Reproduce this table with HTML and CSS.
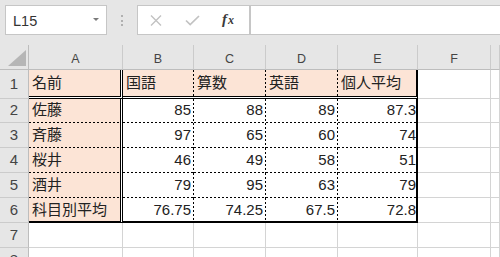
FILE: index.html
```html
<!DOCTYPE html>
<html lang="ja">
<head>
<meta charset="utf-8">
<title>Sheet</title>
<link rel="stylesheet" href="styles.css">
</head>
<body>
<div class="topbar">
  <div class="namebox"><span class="ref">L15</span><span class="caret"></span></div>
  <div class="grip"><i></i><i></i><i></i></div>
  <div class="btns">
    <span class="btn"><svg width="12" height="11" viewBox="0 0 12 11"><path d="M1 0.5 L11 10.5 M11 0.5 L1 10.5" stroke="#c2c2c2" stroke-width="1.4" fill="none"/></svg></span>
    <span class="btn"><svg width="15" height="11" viewBox="0 0 15 11"><path d="M1 5.5 L5.2 9.6 L14 1" stroke="#c2c2c2" stroke-width="1.7" fill="none"/></svg></span>
    <span class="btn fx"><span class="f">f</span><span class="x">x</span></span>
  </div>
  <div class="formula"></div>
</div>
<div class="sheet">
  <div class="corner"><svg width="28" height="24" viewBox="0 0 28 24"><polygon points="26,5 26,21 8,21" fill="#b6b6b6"/></svg></div>
  <div class="ch">A</div><div class="ch">B</div><div class="ch">C</div><div class="ch">D</div><div class="ch">E</div><div class="ch">F</div><div class="ch"></div>

  <div class="rh r1">1</div>
  <div class="c fill dr db">名前</div>
  <div class="c fill vdot db">国語</div>
  <div class="c fill vdot db">算数</div>
  <div class="c fill vdot db">英語</div>
  <div class="c fill tr db">個人平均</div>
  <div class="c"></div><div class="c"></div>

  <div class="rh">2</div>
  <div class="c fill dr hdot">佐藤</div>
  <div class="c num vdot hdot">85</div>
  <div class="c num vdot hdot">88</div>
  <div class="c num vdot hdot">89</div>
  <div class="c num tr hdot">87.3</div>
  <div class="c"></div><div class="c"></div>

  <div class="rh">3</div>
  <div class="c fill dr hdot">斉藤</div>
  <div class="c num vdot hdot">97</div>
  <div class="c num vdot hdot">65</div>
  <div class="c num vdot hdot">60</div>
  <div class="c num tr hdot">74</div>
  <div class="c"></div><div class="c"></div>

  <div class="rh">4</div>
  <div class="c fill dr hdot">桜井</div>
  <div class="c num vdot hdot">46</div>
  <div class="c num vdot hdot">49</div>
  <div class="c num vdot hdot">58</div>
  <div class="c num tr hdot">51</div>
  <div class="c"></div><div class="c"></div>

  <div class="rh">5</div>
  <div class="c fill dr hdot">酒井</div>
  <div class="c num vdot hdot">79</div>
  <div class="c num vdot hdot">95</div>
  <div class="c num vdot hdot">63</div>
  <div class="c num tr hdot">79</div>
  <div class="c"></div><div class="c"></div>

  <div class="rh">6</div>
  <div class="c fill dr tb">科目別平均</div>
  <div class="c num vdot tb">76.75</div>
  <div class="c num vdot tb">74.25</div>
  <div class="c num vdot tb">67.5</div>
  <div class="c num tr tb">72.8</div>
  <div class="c"></div><div class="c"></div>

  <div class="rh">7</div>
  <div class="c"></div><div class="c"></div><div class="c"></div><div class="c"></div><div class="c"></div><div class="c"></div><div class="c"></div>

  <div class="rh">8</div>
  <div class="c"></div><div class="c"></div><div class="c"></div><div class="c"></div><div class="c"></div><div class="c"></div><div class="c"></div>
</div>
</body>
</html>
```

FILE: styles.css
```css
* { box-sizing: border-box; margin: 0; padding: 0; }
html, body { width: 500px; height: 257px; overflow: hidden; background: #fff; }
body { font-family: "Liberation Sans", "Noto Sans CJK JP", sans-serif; }

/* formula bar area */
.topbar { display: flex; height: 45px; background: #e6e6e6; padding: 5px 0 10px 5px; }
.namebox { width: 102px; background: #fff; border: 1px solid #c6c6c6; display: flex; justify-content: space-between; align-items: center; padding: 3px 7px 0 7px; }
.ref { font-size: 14.5px; color: #333; line-height: 17px; }
.caret { align-self: flex-start; margin-top: 9px; width: 0; height: 0; border-left: 3.5px solid transparent; border-right: 3.5px solid transparent; border-top: 3.5px solid #7a7a7a; }
.grip { width: 30px; display: flex; flex-direction: column; align-items: center; gap: 2.5px; padding-top: 10px; }
.grip i { display: block; width: 2px; height: 2px; background: #b0b0b0; }
.btns { width: 113px; background: #fff; border: 1px solid #c6c6c6; display: flex; }
.btn { width: 36px; display: flex; align-items: center; justify-content: center; }
.fx { font-family: "Liberation Serif", serif; font-style: italic; color: #3a3a3a; padding-bottom: 2px; }
.fx .f { font-size: 15px; font-weight: bold; }
.fx .x { font-size: 12px; font-weight: bold; margin-left: 1px; padding-top: 3px; }
.formula { flex: 1; background: #fff; border: 1px solid #c6c6c6; margin-right: -2px; }

/* sheet */
.sheet { display: grid; grid-template-columns: 29px 94px 71px 72px 72px 80px 73px 1fr; grid-template-rows: 25px 29px 24px 25px 25px 25px 25px 25px 25px; }
.corner { background: #e6e6e6; border-right: 1px solid #bdbdbd; border-bottom: 1px solid #bdbdbd; }
.corner svg { display: block; }
.ch { background: #e6e6e6; border-right: 1px solid #cbcbcb; border-bottom: 1px solid #bdbdbd; display: flex; justify-content: center; align-items: flex-end; padding-bottom: 3px; font-size: 12.5px; line-height: 14px; color: #444; }
.rh { background: #e6e6e6; border-right: 1px solid #bdbdbd; border-bottom: 1px solid #cbcbcb; display: flex; justify-content: center; align-items: flex-end; padding-bottom: 4px; font-size: 15px; line-height: 17px; color: #444; }
.rh.r1 { padding-bottom: 6px; }

.c { position: relative; display: flex; align-items: flex-end; white-space: nowrap; font-size: 15px; line-height: 17px; color: #222; background: #fff; background-clip: padding-box; border-right: 1px solid #d4d4d4; border-bottom: 1px solid #d4d4d4; padding: 0 1px 5px 3px; }
.fill { background-color: #fce4d6; }
.num { justify-content: flex-end; padding-right: 3px; }
.num.tr { padding-right: 0; }

.dr { border-right: 3px double #000; }
.db { border-bottom: 3px double #000; }
.tr { border-right: 2px solid #000; }
.tb { border-bottom: 2px solid #000; padding-bottom: 3px; }

.vdot { border-right: 0; }
.vdot::before { content: ""; position: absolute; top: 0; right: 0; bottom: 0; width: 1px; background: repeating-linear-gradient(to bottom, #000 0 2px, transparent 2px 4px); }
.hdot { border-bottom: 0; }
.hdot::after { content: ""; position: absolute; left: 0; right: 0; bottom: 0; height: 1px; background: repeating-linear-gradient(to right, #000 0 2px, transparent 2px 4px); }
```
